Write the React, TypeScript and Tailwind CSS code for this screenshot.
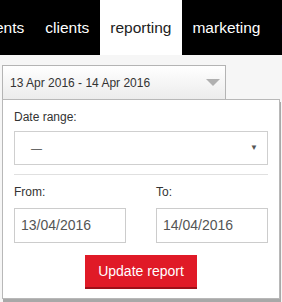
import React from 'react';

const navItems = [
  { label: 'ents', active: false, cls: '-ml-[15.5px]' },
  { label: 'clients', active: false, cls: '' },
  { label: 'reporting', active: true, cls: '' },
  { label: 'marketing', active: false, cls: '' },
];

const App = () => {
  return (
    <div className="w-[282px] h-[302px] overflow-hidden bg-[#f6f6f6] font-['Liberation_Sans',Arial,sans-serif]">
      <nav className="h-[55px] bg-black flex items-stretch overflow-hidden whitespace-nowrap text-[15.5px]">
        {navItems.map((item) => (
          <a
            key={item.label}
            href="#"
            className={`flex items-center px-[10.5px] shrink-0 ${item.cls} ${
              item.active ? 'bg-white text-[#222]' : 'text-white'
            }`}
          >
            {item.label}
          </a>
        ))}
        <a href="#" className="flex items-center px-[10.5px] shrink-0 text-[#1a1aff]">
          more
        </a>
      </nav>

      <div className="relative pt-[10px]">
        <button className="ml-[2px] w-[224px] h-[35px] flex items-center justify-between pl-[7px] pr-[5px] border border-[#b4b4b4] bg-gradient-to-b from-white to-[#ececec] text-[12px] text-[#333]">
          <span>13 Apr 2016 - 14 Apr 2016</span>
          <svg width="14" height="8" viewBox="0 0 14 8">
            <polygon points="0,0 14,0 7,7" fill="#b0b0b0" />
          </svg>
        </button>

        <div className="absolute left-[2px] top-[44px] w-[278px] bg-white border border-[#b8b8b8] shadow-[1px_3px_0_#a8a8a8] px-[11px] pt-[9px] pb-[9px] text-[12px] text-[#333]">
          <label className="block leading-[16px]">Date range:</label>
          <div className="mt-[6px] h-[34px] border border-[#cfcfcf] flex items-center justify-between pl-[16px] pr-[9px]">
            <span className="text-[#444] text-[11px]">—</span>
            <span className="text-[#555] text-[8px]">▼</span>
          </div>
          <div className="mt-[9px] h-px bg-[#e0e0e0]" />
          <div className="mt-[9px] flex justify-between">
            <div className="w-[112px]">
              <label className="block leading-[16px]">From:</label>
              <div className="mt-[8px] h-[35px] border border-[#cccccc] flex items-center pl-[6px] text-[14px] text-[#555]">
                13/04/2016
              </div>
            </div>
            <div className="w-[112px]">
              <label className="block leading-[16px]">To:</label>
              <div className="mt-[8px] h-[35px] border border-[#cccccc] flex items-center pl-[6px] text-[14px] text-[#555]">
                14/04/2016
              </div>
            </div>
          </div>
          <button className="mt-[12px] mx-auto block w-[112px] h-[34px] bg-[#e01a27] border-b-2 border-[#9e1019] text-white text-[14px]">
            Update report
          </button>
        </div>
      </div>
    </div>
  );
};

export default App;
